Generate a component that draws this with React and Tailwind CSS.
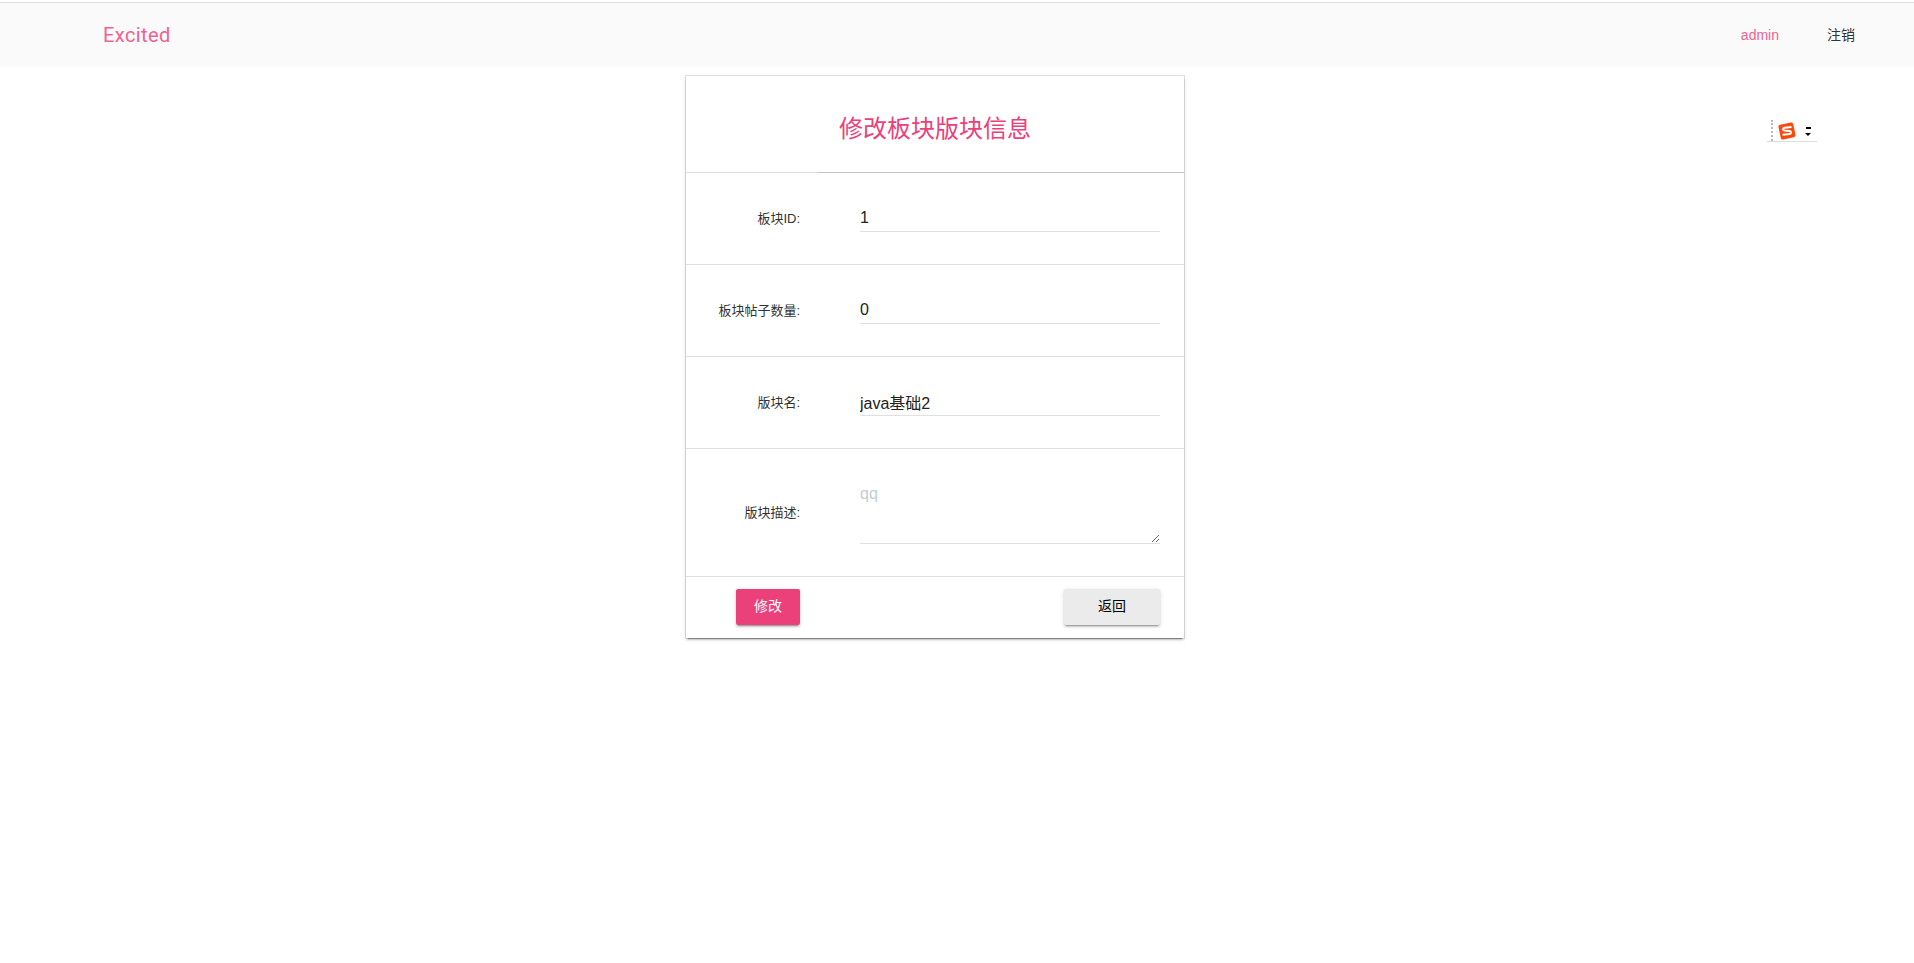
const cjk = "font-['Liberation_Sans','Noto_Sans_CJK_SC',sans-serif]";
const depth = "shadow-[0_2px_2px_0_rgba(0,0,0,0.14),0_3px_1px_-2px_rgba(0,0,0,0.2),0_1px_5px_0_rgba(0,0,0,0.12)]";

function Field({ label, value }) {
  return (
    <div className="h-[92px] border-t border-[#e0e0e0] flex items-center">
      <label className="w-[114px] text-right text-[13px] text-[#333]">{label}</label>
      <input
        readOnly
        value={value}
        className="ml-[60px] w-[300px] h-[28px] -mt-[1px] border-b border-[#e0e0e0] text-[16px] text-[#222] outline-none"
      />
    </div>
  );
}

// the floating input method widget on the right
function ImeWidget() {
  return (
    <div className="absolute left-[1767px] top-[120px] w-[50px] h-[22px] border-b border-[#ddd]">
      <div className="absolute left-[4px] top-0 h-[21px] border-l-2 border-dotted border-[#bbb]" />
      <svg className="absolute left-[10px] top-[1px]" width="20" height="20" viewBox="0 0 20 20">
        <rect x="2.5" y="2.5" width="15" height="15" rx="2" fill="#f94a0c" transform="rotate(-12 10 10)" />
        <path d="M14.5 6 L7.5 6.8 C5.5 7.1 5.5 9.2 7.5 9.5 L12.5 10 C14.5 10.3 14.5 12.6 12.5 12.9 L5.5 13.8" fill="none" stroke="#fff" strokeWidth="2" />
      </svg>
      <div className="absolute left-[39px] top-[7px] w-[5px] h-[2px] bg-black" />
      <div className="absolute left-[38px] top-[13px] w-0 h-0 border-x-[3px] border-t-[3px] border-x-transparent border-t-black" />
    </div>
  );
}

export default function App() {
  return (
    <div className={`relative min-h-[963px] bg-white pt-[2px] ${cjk}`}>
      {/* navbar */}
      <nav className="h-[65px] bg-[#fafafa] border-t border-[#e0e0e0] flex items-center pl-[103px] pr-[59px]">
        <a className="font-['Roboto',sans-serif] text-[20px] tracking-[0.4px] text-[#f06292]">Excited</a>
        <div className="ml-auto flex items-center gap-[48px] text-[14px]">
          <a className="text-[#f06292]">admin</a>
          <a className="text-[#333]">注销</a>
        </div>
      </nav>

      <ImeWidget />

      {/* card */}
      <div className="ml-[686px] mt-[9px] w-[498px] bg-white shadow-[0_2px_2px_0_rgba(0,0,0,0.14),0_3px_1px_-2px_rgba(0,0,0,0.3),0_1px_5px_0_rgba(0,0,0,0.12),0_0_0_1px_#e6e6e6]">
        <div className="h-[96px] pt-[9px] flex items-center justify-center text-[24px] text-[#ec407a]">修改板块版块信息</div>
        <div className="flex h-px -mb-px relative">
          <div className="w-[132px] bg-[#e0e0e0]" />
          <div className="flex-1 bg-[#c4c4c4]" />
        </div>
        <Field label="板块ID:" value="1" />
        <Field label="板块帖子数量:" value="0" />
        <Field label="版块名:" value="java基础2" />
        <div className="h-[128px] border-t border-[#e0e0e0] flex items-center">
          <label className="w-[114px] text-right text-[13px] text-[#333]">版块描述:</label>
          <textarea
            readOnly
            placeholder="qq"
            className="ml-[60px] w-[300px] h-[68px] -mt-[6px] pt-[6px] border-b border-[#e0e0e0] text-[16px] outline-none resize-y placeholder:text-[#c5ccd3]"
          />
        </div>
        <div className="h-[62px] pb-[2px] border-t border-[#e0e0e0] flex items-center pl-[50px] pr-[24px] justify-between">
          <button className={`w-[64px] h-[36px] rounded-[2px] bg-[#ec407a] text-white text-[14px] ${depth}`}>修改</button>
          <button className={`w-[96px] h-[36px] rounded-[2px] bg-[#ebebeb] text-black text-[14px] ${depth}`}>返回</button>
        </div>
      </div>
    </div>
  );
}
